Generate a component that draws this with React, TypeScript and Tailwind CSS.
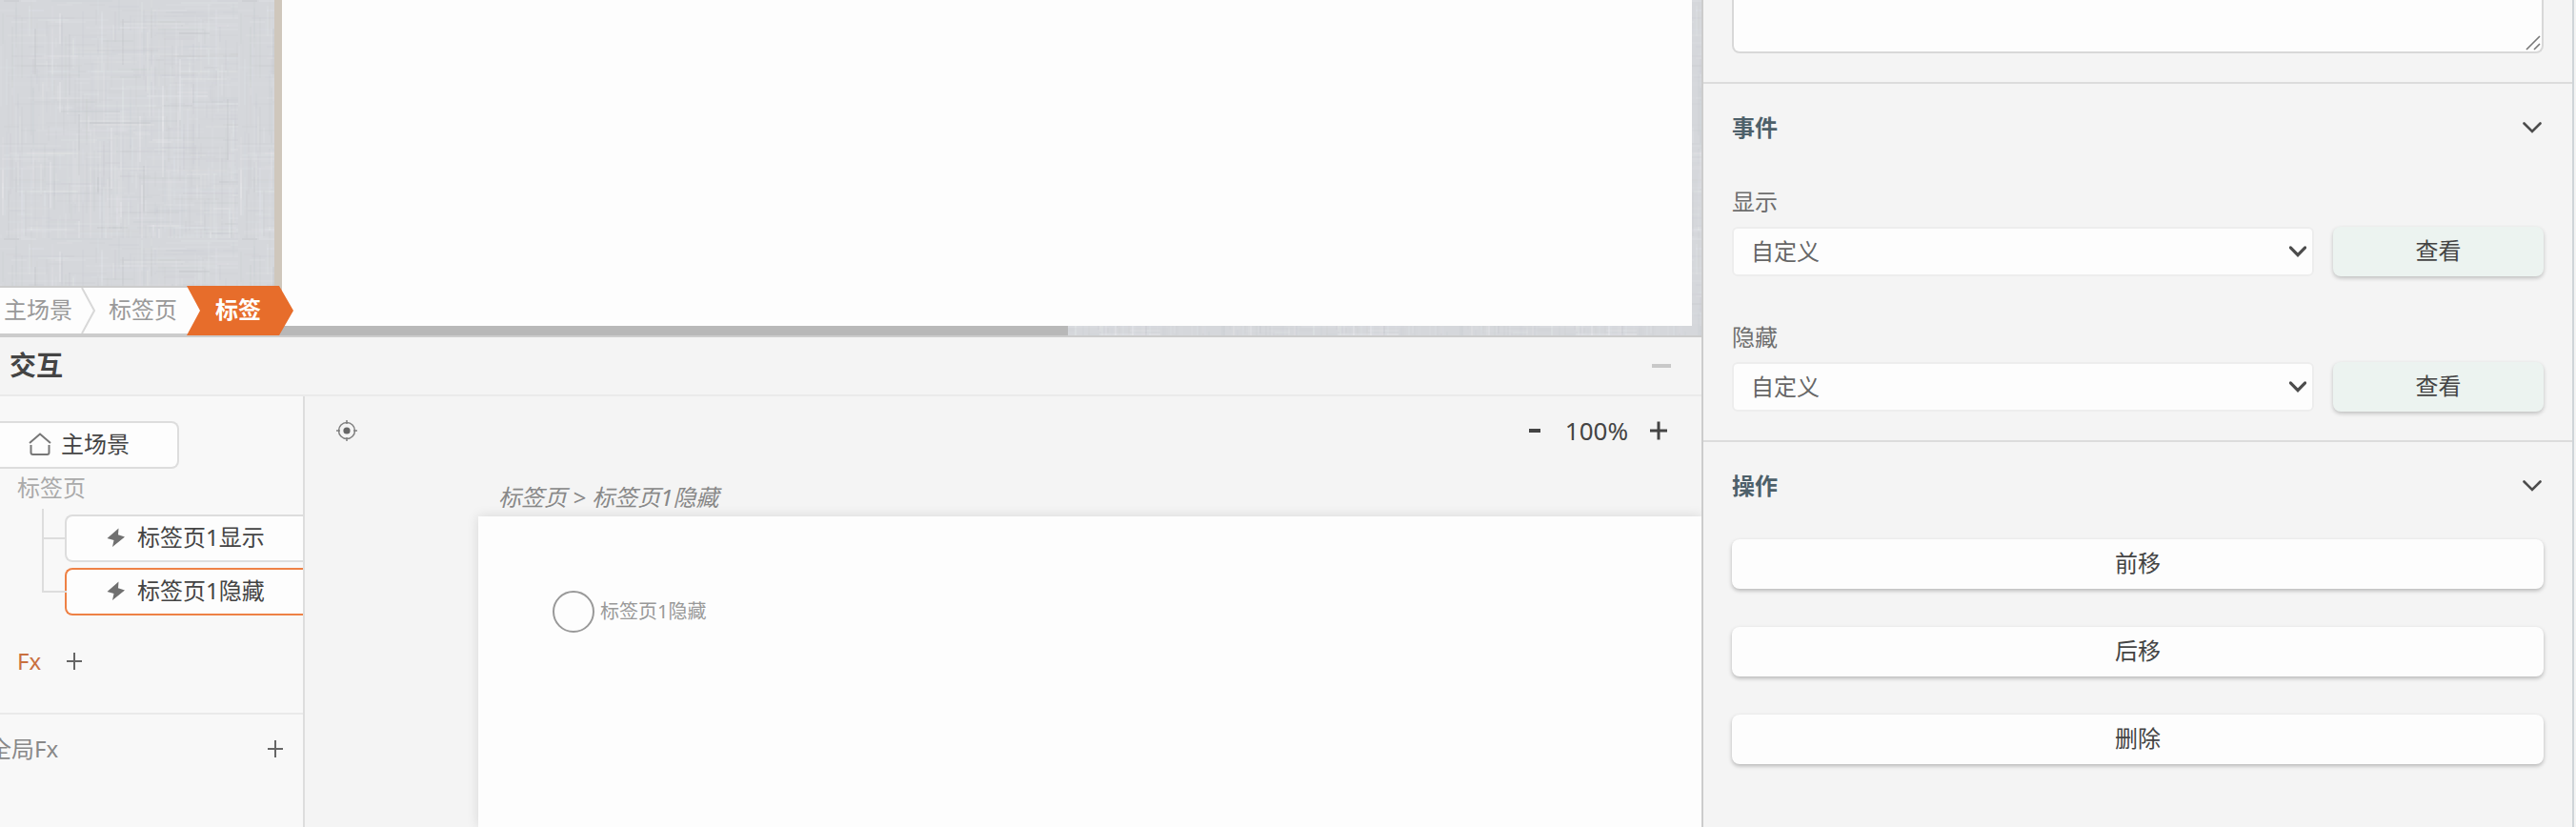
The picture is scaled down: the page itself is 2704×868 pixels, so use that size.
import React from "react";

type Thread = { x: number; y: number; w: number; h: number; light: boolean; o: number };

function makeThreads(): Thread[] {
  let seed = 17;
  const rnd = () => {
    seed = (seed * 16807) % 2147483647;
    return seed / 2147483647;
  };
  const out: Thread[] = [];
  for (let i = 0; i < 900; i++) {
    const vertical = rnd() > 0.5;
    const length = 16 + Math.floor(rnd() * 4) * 16;
    const x = Math.floor(rnd() * 125) * 2;
    const y = Math.floor(rnd() * 125) * 2;
    out.push({
      x,
      y,
      w: vertical ? 2 : length,
      h: vertical ? length : 2,
      light: rnd() > 0.5,
      o: rnd() > 0.98 ? 0.3 : 0.04 + rnd() * 0.11,
    });
  }
  return out;
}

const threads = makeThreads();

function Linen() {
  return (
    <svg className="absolute inset-0 h-full w-full" aria-hidden="true">
      <defs>
        <pattern id="linen" width="250" height="250" patternUnits="userSpaceOnUse">
          <rect width="250" height="250" fill="#d5d7db" />
          {threads.map((t, i) => (
            <rect key={i} x={t.x} y={t.y} width={t.w} height={t.h} fill={t.light ? "#eceef0" : "#bfc1c6"} opacity={t.o} />
          ))}
        </pattern>
      </defs>
      <rect width="100%" height="100%" fill="url(#linen)" />
    </svg>
  );
}

function Bolt() {
  return (
    <svg className="h-5 w-5 shrink-0" viewBox="0 0 20 20" fill="#707070" aria-hidden="true">
      <path d="M12.5 0.5 L0.5 11 L7.5 13 L6 20 L19 9.5 L12 7.2 Z" />
    </svg>
  );
}

function Plus({ className }: { className: string }) {
  return (
    <svg className={className} viewBox="0 0 18 18" fill="none" stroke="currentColor" strokeWidth="2" aria-hidden="true">
      <path d="M9 0V18M1 9H17" />
    </svg>
  );
}

function Chevron({ className, weight }: { className: string; weight: number }) {
  return (
    <svg className={className} viewBox="0 0 20 12" fill="none" stroke="#4c4c4c" strokeWidth={weight} strokeLinecap="round" aria-hidden="true">
      <path d="M1.5 1.5L10 10L18.5 1.5" />
    </svg>
  );
}

function Breadcrumb() {
  return (
    <nav aria-label="层级" className="absolute bottom-0 left-0 flex h-13 items-stretch leading-9">
      <div className="flex items-center border-y-2 border-[#ccc] bg-[#fdfdfd] pr-6 pl-1 text-[#999]">
        <a href="#scene" className="pb-0.5">主场景</a>
        <svg className="mr-3 ml-2 h-12 w-[18px]" viewBox="0 0 18 48" fill="none" stroke="#d8d8d8" strokeWidth="2" aria-hidden="true">
          <path d="M2 0L15 24L2 48" />
        </svg>
        <a href="#tabs" className="pb-0.5">标签页</a>
      </div>
      <a
        href="#tab"
        className="-ml-[14px] flex w-28 items-center bg-[#e76d2b] pb-0.5 pl-[30px] font-bold text-white [clip-path:polygon(0_0,97px_0,100%_50%,97px_100%,0_100%,14px_50%)]"
      >
        标签
      </a>
    </nav>
  );
}

function Stage() {
  return (
    <section className="relative h-[352px] shrink-0 overflow-hidden">
      <Linen />
      <div className="relative flex h-full flex-col pr-[10px] pl-72">
        <div className="flex-1 border-l-8 border-[#cfc7bc] bg-[#fdfdfd]" />
        <div className="h-[10px] w-[56%] bg-[#b8b8b8]" />
      </div>
      <Breadcrumb />
    </section>
  );
}

function TreeNode({ label, active }: { label: string; active?: boolean }) {
  return (
    <li className="flex items-center">
      <span className={active ? "z-10 h-0.5 w-6 bg-[#ddd]" : "h-0.5 w-[22px] bg-[#ddd]"} />
      <button
        type="button"
        className={
          active
            ? "-ml-0.5 flex h-[50px] flex-1 items-center gap-3 rounded-l-lg border-2 border-r-0 border-[#ee8145] bg-[#fdfdfd] pb-0.5 pl-[42px] text-[#444]"
            : "flex h-[50px] flex-1 items-center gap-3 rounded-l-lg border-2 border-r-0 border-[#ddd] bg-[#fdfdfd] pb-0.5 pl-[42px] text-[#444]"
        }
      >
        <Bolt />
        <span>{label}</span>
      </button>
    </li>
  );
}

function EventTree() {
  return (
    <aside className="w-80 shrink-0 overflow-hidden border-r-2 border-[#ddd] bg-[#f8f8f8] leading-9">
      <button
        type="button"
        className="mt-[26px] flex h-[50px] w-[188px] items-center gap-2.5 rounded-r-lg border-2 border-l-0 border-[#ddd] bg-[#fdfdfd] pb-0.5 pl-[30px] text-[#444]"
      >
        <svg className="h-6 w-6" viewBox="0 0 24 24" fill="none" stroke="#777" strokeWidth="2" aria-hidden="true">
          <path d="M1 11L12 1.5L23 11M2.5 13V21Q2.5 23 4.5 23H19.5Q21.5 23 21.5 21V13" />
        </svg>
        主场景
      </button>
      <p className="mt-0.5 pl-[18px] text-[#aaa]">标签页</p>
      <div className="mt-1 pl-11">
        <div className="relative">
          <span className="absolute top-0 left-0 h-[88px] w-0.5 bg-[#ddd]" />
          <ul className="flex flex-col gap-1.5 pt-1.5 pl-0.5">
            <TreeNode label="标签页1显示" />
            <TreeNode label="标签页1隐藏" active />
          </ul>
        </div>
      </div>
      <div className="mt-[30px] flex items-center gap-[26px] pl-[18px] text-[#c9703f]">
        Fx
        <button type="button" aria-label="添加 Fx" className="text-[#666]">
          <Plus className="h-[18px] w-[18px]" />
        </button>
      </div>
      <div className="mt-9 flex items-center justify-between border-t-2 border-[#eaeaea] pt-[18px] pr-5 text-[#888]">
        <span className="-ml-3">全局Fx</span>
        <button type="button" aria-label="添加全局 Fx" className="text-[#666]">
          <Plus className="h-[18px] w-[18px]" />
        </button>
      </div>
    </aside>
  );
}

function FlowCanvas() {
  return (
    <div className="flex min-w-0 flex-1 flex-col overflow-hidden leading-9">
      <div className="flex items-center justify-between pt-[18px] pr-[35px] pl-8">
        <button type="button" aria-label="定位">
          <svg className="h-6 w-6" viewBox="0 0 24 24" fill="none" stroke="#808080" strokeWidth="1.5" aria-hidden="true">
            <circle cx="12" cy="12" r="8.5" />
            <circle cx="12" cy="12" r="3.6" fill="#666" stroke="none" />
            <path d="M12 1V5M12 19V23M1 12H5M19 12H23" strokeWidth="1.5" />
          </svg>
        </button>
        <div className="flex items-center text-[26px] text-[#444]">
          <button type="button" aria-label="缩小" className="mr-[26px] h-1 w-3 bg-[#444]" />
          <span>100%</span>
          <button type="button" aria-label="放大" className="ml-[22px] text-[#444]">
            <svg className="h-5 w-5" viewBox="0 0 20 20" fill="none" stroke="currentColor" strokeWidth="3" aria-hidden="true">
              <path d="M10 0.5V19.5M1 10H19" />
            </svg>
          </button>
        </div>
      </div>
      <p className="mt-[34px] pl-[203px] text-[#888] italic">标签页 &gt; 标签页1隐藏</p>
      <div className="mt-0.5 ml-[182px] flex-1 bg-[#fdfdfd] pt-[78px] pl-[78px] shadow-[0_0_12px_rgba(0,0,0,0.12)]">
        <div className="flex items-center gap-1.5 text-[20px] text-[#999]">
          <span className="h-11 w-11 rounded-full border-2 border-[#999]" />
          标签页1隐藏
        </div>
      </div>
    </div>
  );
}

function Interaction() {
  return (
    <section className="flex flex-1 flex-col border-t-2 border-[#ccc]">
      <header className="flex h-[62px] items-center justify-between border-b-2 border-[#eaeaea] pr-8 pl-[10px]">
        <h2 className="pb-0.5 text-[28px] leading-9 font-bold text-[#444]">交互</h2>
        <button type="button" aria-label="收起" className="h-1 w-5 bg-[#c8c8c8]" />
      </header>
      <div className="flex flex-1">
        <EventTree />
        <FlowCanvas />
      </div>
    </section>
  );
}

function SectionTitle({ children }: { children: React.ReactNode }) {
  return (
    <div className="flex items-center justify-between">
      <h3 className="font-bold text-[#4d606a]">{children}</h3>
      <button type="button" aria-label="折叠" className="pr-0.5">
        <Chevron className="h-3 w-5" weight={2.6} />
      </button>
    </div>
  );
}

function EventField({ id, label }: { id: string; label: string }) {
  return (
    <div className="flex flex-col gap-2">
      <label htmlFor={id} className="text-[#6e6e6e]">
        {label}
      </label>
      <div className="flex gap-5">
        <div className="relative flex-1">
          <select
            id={id}
            className="h-13 w-full appearance-none rounded-md border-2 border-[#ededed] bg-[#fdfdfd] pl-[18px] text-[#666]"
          >
            <option>自定义</option>
          </select>
          <span className="pointer-events-none absolute inset-y-0 right-2 flex items-center">
            <Chevron className="h-3 w-[18px]" weight={3.6} />
          </span>
        </div>
        <button
          type="button"
          className="h-13 w-[221px] rounded-lg bg-[#ecf3f0] pb-0.5 text-[#444] shadow-[0_2px_4px_rgba(0,0,0,0.22)]"
        >
          查看
        </button>
      </div>
    </div>
  );
}

function Inspector() {
  return (
    <aside className="w-[918px] shrink-0 border-l-2 border-[#ccc] pr-0.5 leading-9">
      <div className="min-h-full border-r-2 border-[#cfd4d8]">
        <div className="relative px-[30px] pb-[30px]">
          <textarea
            aria-label="描述"
            className="block h-14 w-full resize-none rounded-b-lg border-2 border-t-0 border-[#d8d8d8] bg-[#fdfdfd]"
          />
          <svg className="absolute right-[33px] bottom-[33px] h-4 w-4" viewBox="0 0 16 16" stroke="#777" strokeWidth="1.6" aria-hidden="true">
            <path d="M1 15L15 1M9 15L15 9" />
          </svg>
        </div>
        <section className="border-t-2 border-[#dcdcdc] px-[30px] pt-7 pb-[30px]">
          <SectionTitle>事件</SectionTitle>
          <div className="mt-[42px] flex flex-col gap-[46px]">
            <EventField id="on-show" label="显示" />
            <EventField id="on-hide" label="隐藏" />
          </div>
        </section>
        <section className="border-t-2 border-[#dcdcdc] px-[30px] pt-7">
          <SectionTitle>操作</SectionTitle>
          <div className="mt-[38px] flex flex-col gap-10">
            {["前移", "后移", "删除"].map((name) => (
              <button
                key={name}
                type="button"
                className="h-13 rounded-lg bg-[#fdfdfd] pb-0.5 text-[#444] shadow-[0_2px_4px_rgba(0,0,0,0.26)]"
              >
                {name}
              </button>
            ))}
          </div>
        </section>
      </div>
    </aside>
  );
}

export default function App() {
  return (
    <div
      lang="zh-CN"
      className="flex min-h-screen bg-[#f4f4f4] font-['Noto_Sans','Noto_Sans_CJK_SC',sans-serif] text-[24px]"
    >
      <main className="flex min-w-0 flex-1 flex-col">
        <Stage />
        <Interaction />
      </main>
      <Inspector />
    </div>
  );
}
